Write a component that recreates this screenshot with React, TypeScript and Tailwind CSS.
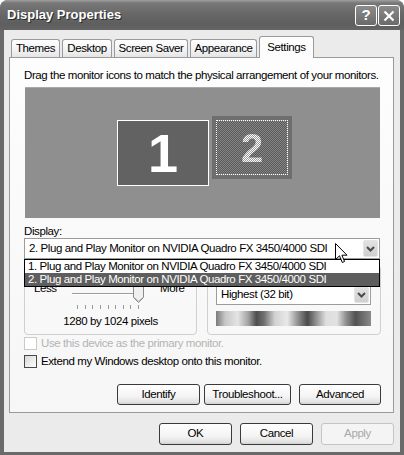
import React from "react";

const Chevron = () => (
  <svg width="9" height="6" viewBox="0 0 9 6">
    <polyline points="1,1 4.5,4.5 8,1" fill="none" stroke="#4a4a4a" strokeWidth="2" />
  </svg>
);

const Combo = ({ text, className }: { text: string; className: string }) => (
  <div className={`flex bg-white border border-[#9c9c9c] p-[1px] ${className}`}>
    <div className="flex-1 flex items-center pl-[3px] text-[11.5px] whitespace-nowrap overflow-hidden">{text}</div>
    <div className="w-[15px] h-full flex items-center justify-center rounded-[2px] border border-[#e4e4e4] bg-[linear-gradient(#e2e2e2,#cfcfcf)]">
      <Chevron />
    </div>
  </div>
);

const XpButton = ({ label, className, disabled }: { label: string; className: string; disabled?: boolean }) => (
  <div
    className={`h-full flex items-center justify-center rounded-[3px] border text-[11.5px] ${
      disabled
        ? "border-[#c4c4c4] bg-[#f4f4f4] text-[#a8a8a8]"
        : "border-[#3a3a3a] bg-[linear-gradient(#ffffff,#f4f4f4_60%,#e2e2e2_90%,#cfcfcf)] text-black"
    } ${className}`}
  >
    {label}
  </div>
);

const Checkbox = ({ label, disabled }: { label: string; disabled?: boolean }) => (
  <div className="flex items-center h-[13px] pl-[14px]">
    <div
      className={`w-[13px] h-[13px] border ${
        disabled ? "border-[#cacaca] bg-white" : "border-[#4a4a4a] bg-[linear-gradient(135deg,#d8d8d8,#ffffff)]"
      }`}
    />
    <span className={`ml-[4px] text-[11.5px] leading-[13px] ${disabled ? "text-[#b4b4b4]" : "text-black"}`}>{label}</span>
  </div>
);

export default function App() {
  const tabs = [
    { t: "Themes", w: "w-[49px]" },
    { t: "Desktop", w: "w-[50px]" },
    { t: "Screen Saver", w: "w-[74px]" },
    { t: "Appearance", w: "w-[67px]" },
  ];
  return (
    <div className="w-[404px] h-[455px] bg-white font-['Liberation_Sans',Arial,sans-serif] text-black tracking-[-0.4px]">
      <div className="relative w-[404px] h-[455px] rounded-t-[8px] bg-[#6a6a6a] flex flex-col overflow-hidden">
        {/* Title bar */}
        <div className="h-[30px] flex items-center justify-between pl-[7px] pr-[4px] bg-[linear-gradient(#a0a0a0,#787878_3px,#686868_45%,#5e5e5e_80%,#646464)]">
          <span className="text-white font-bold text-[13px] tracking-normal [text-shadow:1px_1px_0_#2a2a2a]">Display Properties</span>
          <div className="flex gap-[1px] mt-[1px]">
            <div className="w-[22px] h-[21px] rounded-[3px] border border-white bg-[linear-gradient(#8c8c8c,#6a6a6a)] flex items-center justify-center text-white font-bold text-[15px] tracking-normal">
              ?
            </div>
            <div className="w-[22px] h-[21px] rounded-[3px] border border-white bg-[linear-gradient(#8a8a8a,#6a6a6a)] flex items-center justify-center">
              <svg width="12" height="12" viewBox="0 0 12 12">
                <path d="M1.5 1.5 L10.5 10.5 M10.5 1.5 L1.5 10.5" stroke="white" strokeWidth="2.2" />
              </svg>
            </div>
          </div>
        </div>

        {/* Body */}
        <div className="flex-1 ml-[4px] mr-[4px] mb-[3px] bg-[#ebebeb] flex flex-col">
          {/* Tabs */}
          <div className="mt-[6px] h-[21px] pl-[7px] flex items-end gap-[2px]">
            {tabs.map((tab) => (
              <div
                key={tab.t}
                className={`${tab.w} h-[18px] pt-[1px] flex items-center justify-center whitespace-nowrap text-[11.5px] border border-b-0 border-[#9a9a9a] rounded-t-[3px] bg-[linear-gradient(#ffffff,#f0f0f0_70%,#e4e4e4)]`}
              >
                {tab.t}
              </div>
            ))}
            <div className="relative z-10 -mb-[1px] w-[55px] h-[22px] flex items-start pt-[2px] justify-center whitespace-nowrap text-[11.5px] border border-b-0 border-[#9a9a9a] rounded-t-[3px] bg-[#fcfcfc]">
              Settings
            </div>
          </div>

          {/* Panel */}
          <div className="ml-[5px] w-[385px] h-[356px] border border-[#9a9a9a] bg-[linear-gradient(#fdfdfd,#f6f6f6)] flex flex-col">
            <div className="mt-[10px] ml-[14px] h-[14px] leading-[14px] text-[11.5px] whitespace-nowrap">
              Drag the monitor icons to match the physical arrangement of your monitors.
            </div>

            {/* Monitor area */}
            <div className="mt-[5px] ml-[15px] w-[355px] h-[131px] bg-[#8f8f8f] border-t border-[#a8a8a8] flex items-start pl-[92px] pt-[28px]">
              <div className="mt-[4px] w-[92px] h-[66px] bg-[#626262] border border-white flex items-center justify-center">
                <span className="text-white font-bold text-[54px] leading-none tracking-normal">1</span>
              </div>
              <div className="ml-[3px] w-[80px] h-[63px] bg-[#6e6e6e] p-[4px]">
                <div className="w-full h-full border border-dotted border-white bg-[repeating-conic-gradient(#5a5a5a_0_25%,#858585_0_50%)] bg-[length:2px_2px] flex items-center justify-center">
                  <span className="font-bold text-[40px] leading-none tracking-normal text-transparent bg-clip-text bg-[repeating-conic-gradient(#ffffff_0_25%,#9a9a9a_0_50%)] bg-[length:2px_2px]">
                    2
                  </span>
                </div>
              </div>
            </div>

            {/* Display label */}
            <div className="mt-[7px] ml-[14px] h-[13px] leading-[13px] text-[11.5px]">Display:</div>

            {/* Display combo with open list */}
            <div className="relative ml-[14px] w-[356px] h-[21px] z-20">
              <Combo className="w-full h-full" text="2. Plug and Play Monitor on NVIDIA Quadro FX 3450/4000 SDI" />
              <div className="absolute left-0 top-[21px] w-[356px] border border-black bg-white text-[11.5px]">
                <div className="h-[13px] leading-[13px] pl-[3px] whitespace-nowrap">
                  1. Plug and Play Monitor on NVIDIA Quadro FX 3450/4000 SDI
                </div>
                <div className="h-[13px] leading-[13px] pl-[3px] bg-[#5e5e5e] text-white whitespace-nowrap">
                  2. Plug and Play Monitor on NVIDIA Quadro FX 3450/4000 SDI
                </div>
              </div>
              {/* mouse cursor */}
              <svg className="absolute left-[311px] top-[5px]" width="13" height="21" viewBox="0 0 13 21">
                <path
                  d="M0.5 0.5 L0.5 16.5 L4.5 12.8 L7.3 19.5 L9.6 18.5 L6.9 12.2 L12 12.2 Z"
                  fill="white"
                  stroke="black"
                  strokeWidth="1"
                  strokeLinejoin="miter"
                />
              </svg>
            </div>

            {/* Group boxes */}
            <div className="mt-[6px] ml-[14px] flex gap-[10px]">
              <div className="relative w-[173px] h-[70px] border border-[#cfcfcf] rounded-[4px] flex flex-col">
                <div className="mt-[15px] pl-[9px] h-[20px] flex text-[11.5px] leading-[14px]">
                  <span className="w-[38px]">Less</span>
                  <div className="relative w-[72px] h-[20px]">
                    <div className="absolute left-0 right-0 top-[12px] h-[2px] border-t border-[#9c9c9c] border-b border-b-white bg-[#e6e6e6]" />
                    <svg className="absolute left-[61px] top-[4px]" width="11" height="18" viewBox="0 0 11 18">
                      <path d="M0.5 0.5 H10.5 V12.5 L5.5 17.5 L0.5 12.5 Z" fill="#f0f0f0" stroke="#8a8a8a" />
                      <path d="M1.5 12.5 L5.5 16.3 L9.5 12.5" fill="none" stroke="#b4b4b4" />
                    </svg>
                  </div>
                  <span className="ml-[16px]">More</span>
                </div>
                <div className="mt-[4px] ml-[52px] w-[62px] h-[4px] flex justify-between">
                  {Array.from({ length: 9 }).map((_, i) => (
                    <div key={i} className="w-[1px] h-[4px] bg-[#9a9a9a]" />
                  ))}
                </div>
                <div className="mt-[5px] h-[14px] leading-[14px] text-[11.5px] text-center">1280 by 1024 pixels</div>
              </div>
              <div className="relative w-[174px] h-[70px] border border-[#cfcfcf] rounded-[4px] flex flex-col">
                <Combo className="mt-[19px] ml-[8px] w-[155px] h-[20px]" text="Highest (32 bit)" />
                <div className="mt-[6px] ml-[8px] w-[155px] h-[15px] bg-[linear-gradient(90deg,#7a7a7a_0%,#c8c8c8_6%,#e4e4e4_14%,#a0a0a0_21%,#4e4e4e_26%,#707070_31%,#d2d2d2_38%,#e8e8e8_46%,#8e8e8e_53%,#4a4a4a_59%,#8a8a8a_64%,#dedede_71%,#e2e2e2_78%,#8e8e8e_84%,#525252_90%,#8a8a8a_100%)]" />
              </div>
            </div>

            {/* Checkboxes */}
            <div className="mt-[2px]">
              <Checkbox label="Use this device as the primary monitor." disabled />
            </div>
            <div className="mt-[5px]">
              <Checkbox label="Extend my Windows desktop onto this monitor." />
            </div>

            {/* Panel buttons */}
            <div className="mt-[16px] h-[21px] flex justify-end pr-[12px]">
              <XpButton label="Identify" className="w-[83px]" />
              <XpButton label="Troubleshoot..." className="w-[87px] ml-[4px]" />
              <XpButton label="Advanced" className="w-[82px] ml-[8px]" />
            </div>
          </div>

          {/* Dialog buttons */}
          <div className="mt-[10px] h-[22px] flex justify-end gap-[8px] pr-[6px]">
            <XpButton label="OK" className="w-[73px]" />
            <XpButton label="Cancel" className="w-[73px]" />
            <XpButton label="Apply" className="w-[73px]" disabled />
          </div>
        </div>
      </div>
    </div>
  );
}
